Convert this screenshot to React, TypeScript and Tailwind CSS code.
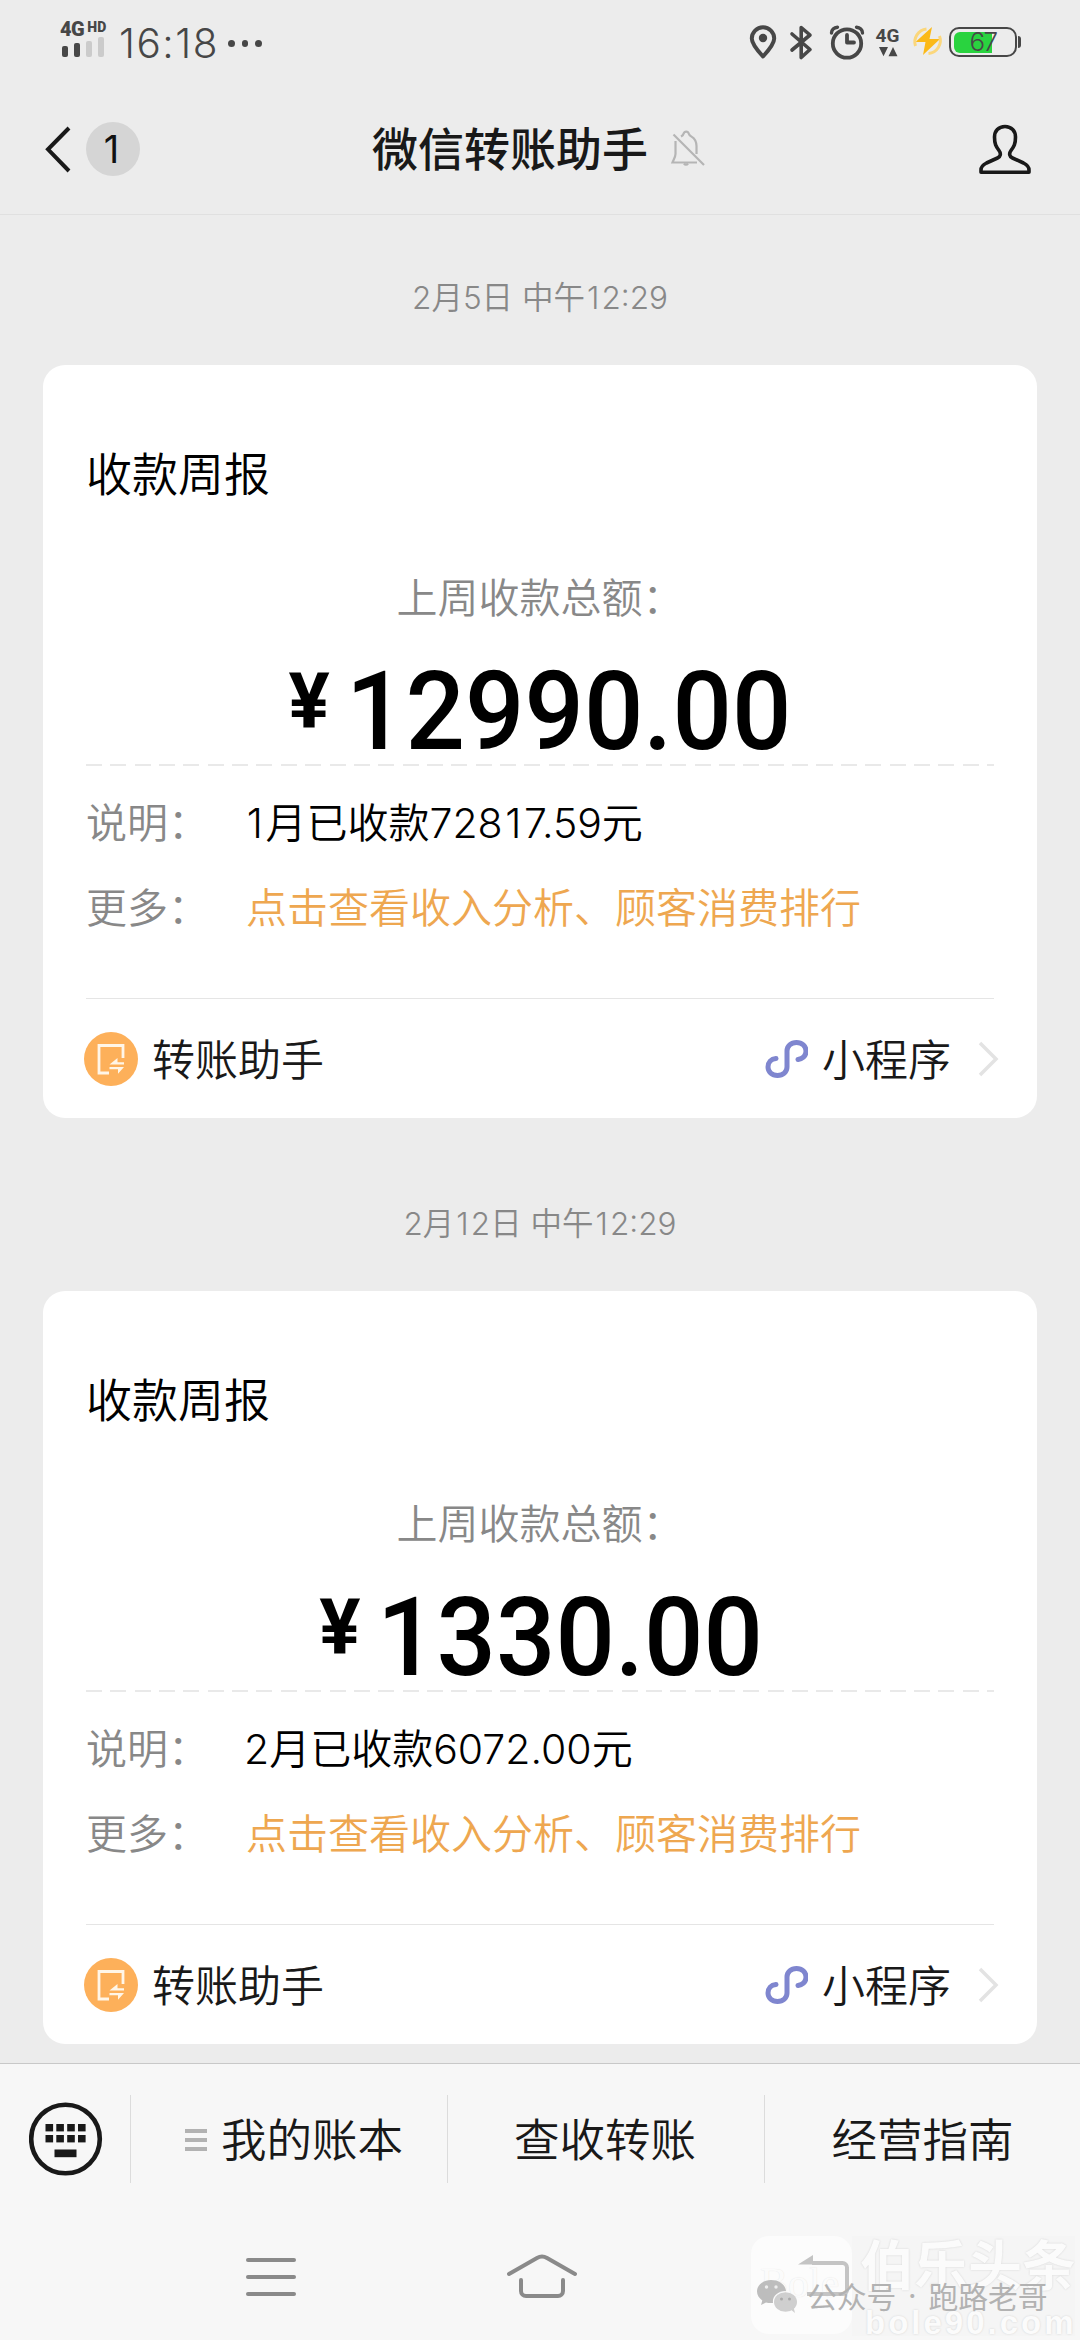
import React from "react";

const font = "font-['Inter','Noto_Sans_CJK_SC',sans-serif]";

/* Gives the narrow figure 1 a little room on both sides. */
function Figures({ text }: { text: string }) {
  return (
    <>
      {text.split(/(1)/).map((part, i) =>
        part === "1" ? (
          <span key={i} className="px-[0.065em]">1</span>
        ) : (
          part
        ),
      )}
    </>
  );
}

function StatusBar() {
  return (
    <div className="flex h-[86px] items-start text-[#474747]">
      <div className="ml-[60px] mt-[20px] flex w-[50px] flex-col">
        <div className="flex h-[18px] items-start font-['Roboto',sans-serif] font-black">
          <span className="text-[20px] leading-[19px] tracking-[-0.5px]">4G</span>
          <span className="ml-[3px] text-[14px] leading-[14px] tracking-[0.2px]">HD</span>
        </div>
        <div className="ml-[2px] flex h-[19px] items-end gap-[6px]">
          <i className="h-[11px] w-[6px] rounded-[2px] bg-[#474747]" />
          <i className="h-[14px] w-[6px] rounded-[2px] bg-[#474747]" />
          <i className="h-[16px] w-[6px] rounded-[2px] bg-[#cbcbcb]" />
          <i className="h-[20px] w-[6px] rounded-[2px] bg-[#cbcbcb]" />
        </div>
      </div>
      <span className="ml-[9px] mt-[19px] w-[100px] whitespace-nowrap text-[40.500px] font-[350] leading-[50px] tracking-[1.500px]">16:18</span>
      <div className="ml-[9px] mt-[40px] flex gap-[7px]">
        <i className="size-[6.5px] rounded-full bg-[#474747]" />
        <i className="size-[6.5px] rounded-full bg-[#474747]" />
        <i className="size-[6.5px] rounded-full bg-[#474747]" />
      </div>
      <div className="ml-auto mt-[20px] flex h-[44px] items-center">
        <svg width="160" height="44" viewBox="745 20 160 44" fill="none" stroke="#474747">
          <path d="M763 56.500C757 50 751.800 44 751.800 38.500a11.200 11.200 0 0 1 22.400 0C774.200 44 769 50 763 56.500Z" strokeWidth="4" strokeLinejoin="round" />
          <circle cx="763" cy="38" r="4.200" fill="#474747" stroke="none" />
          <path d="M792 34l18 15.500-8.800 8V27.500l8.800 7.500-18 15" strokeWidth="3.600" strokeLinecap="round" strokeLinejoin="round" />
          <circle cx="847" cy="43.500" r="14.200" strokeWidth="3.800" />
          <path d="M847 35v7.500h7" strokeWidth="3.800" strokeLinecap="round" strokeLinejoin="round" />
          <path d="M831.500 33c0-3 2.500-5.500 6-5.800M862.500 33c0-3-2.500-5.500-6-5.800" strokeWidth="3.400" strokeLinecap="round" />
          <path d="M879 47h9l-4.500 9.200ZM888.500 56.200h9L893 47Z" fill="#474747" stroke="none" />
          <text x="875.500" y="41.500" fill="#474747" stroke="none" className="font-['Roboto',sans-serif] text-[19px] font-bold">4G</text>
        </svg>
        <svg className="ml-[6px]" width="34" height="34" viewBox="910 26 34 34">
          <path d="M931 28l-16.500 15h10L922 56l17-16h-10.500Z" fill="#fbb918" />
          <path d="M914.500 47a13 13 0 0 1 11-17M938.500 37a13 13 0 0 1-11 17.500" fill="none" stroke="#fbd77c" strokeWidth="3" />
        </svg>
        <div className="relative ml-[4px] h-[30px] w-[68px] rounded-[10px] border-[2.500px] border-[#474747] p-[2.500px]">
          <div className="h-full w-[38px] rounded-l-[6px] bg-[#29d33f]" />
          <span className="absolute inset-0 text-center text-[26px] font-light leading-[26px] tracking-[-1.500px]">67</span>
        </div>
        <i className="ml-[1px] mr-[59px] h-[12px] w-[3px] rounded-r-[3px] bg-[#474747]" />
      </div>
    </div>
  );
}

function Header() {
  return (
    <div className="flex h-[129px] items-start border-b border-[#e0e0e0]">
      <svg className="ml-[43px] mt-[38px]" width="28" height="50" viewBox="43 124 28 50" fill="none" stroke="#191919" strokeWidth="4">
        <path d="M69 128 48 149.300 69 171" />
      </svg>
      <div className="ml-[15px] mt-[36px] size-[54px] rounded-full bg-[#d5d5d5] pr-[3px] text-center text-[38px] leading-[54px] text-[#111]">1</div>
      <div className="ml-[232px] mt-[33px] text-[46px] font-medium leading-[60px] text-[#191919]">微信转账助手</div>
      <svg className="ml-[22px] mt-[43px]" width="36" height="38" viewBox="670 129 36 38" fill="none" stroke="#b5b5b5" strokeWidth="2.200">
        <path d="M675.500 141v13c0 3-2 6-3 8.500h24.500M681 136.500c1.500-.8 2.300-1.500 2.500-2.700 1-3 4.500-3 5.300 0 .4 1.500 1.200 2 2.700 2.800 3.500 2 5 5 5 9.500v8" />
        <path d="M673.500 134.500 704 165M684 163.500c1 1.400 3 1.400 4 0" />
      </svg>
      <svg className="ml-auto mr-[46px] mt-[36px]" width="58" height="54" viewBox="976 122 58 54" fill="none" stroke="#191919" strokeWidth="3.600" strokeLinejoin="round">
        <path d="M1005 126.500c-6.500 0-10.500 4.700-10.500 10.500 0 7 1.500 9.500 4.500 13.500 2.200 3 1.700 6-1.500 7.500l-11 5c-4.500 2.200-5.500 4-5.500 7v2.200h48v-2.200c0-3-1-4.800-5.500-7l-11-5c-3.200-1.500-3.700-4.500-1.500-7.500 3-4 4.500-6.500 4.500-13.500 0-5.800-4-10.500-10.500-10.500Z" />
      </svg>
    </div>
  );
}

function DateLabel({ text }: { text: string }) {
  return (
    <div className="text-center text-[31.500px] font-[350] leading-[40px] text-[#888]">
      <Figures text={text} />
    </div>
  );
}

function Field({ label, children }: { label: string; children: React.ReactNode }) {
  return (
    <div className="flex text-[41px] font-[350] leading-[50px]">
      <span className="w-[160px] text-[#888]">{label}：</span>
      {children}
    </div>
  );
}

function ReportCard({ amount, summary }: { amount: string; summary: string }) {
  return (
    <section className="mx-[43px] mt-[47px] h-[753px] rounded-[22px] bg-white px-[43px] pt-[79px]">
      <h2 className="text-[46px] font-[350] leading-[60px] text-black">收款周报</h2>
      <div className="mt-[69px] text-center text-[41px] font-[350] leading-[50px] text-[#888]">上周收款总额：</div>
      <div className="mt-[37px] flex h-[104px] items-center justify-center pl-px font-['Roboto',sans-serif] text-black">
        <span className="mb-[20px] mr-[16px] text-[77px] font-bold leading-[84px]">¥</span>
        <span className="-mr-[17px] origin-left scale-x-96 text-[109px] font-medium leading-[104px]">{amount}</span>
      </div>
      <div className="h-[2px] bg-[repeating-linear-gradient(90deg,#e9e9e9_0_16px,transparent_16px_24.350px)]" />
      <div className="mt-[32px]">
        <Field label="说明">
          <span className="-ml-[2px] text-black">
            <Figures text={summary} />
          </span>
        </Field>
      </div>
      <div className="mt-[35px]">
        <Field label="更多">
          <span className="text-[#eea750]">点击查看收入分析、顾客消费排行</span>
        </Field>
      </div>
      <div className="mt-[65px] h-px bg-[#e5e5e5]" />
      <div className="flex h-[119px] items-center text-[43px] font-[350] text-[#191919]">
        <svg className="-ml-[2px]" width="54" height="54" viewBox="0 0 54 54" fill="none">
          <circle cx="27" cy="27" r="27" fill="#fdb05a" />
          <path d="M25 41H15V13.500h24V26" stroke="#fff6e8" strokeWidth="2.800" />
          <path d="M25.500 32.500H40v-2.200h-6.500V26ZM40 35H25.500v2.200H34v4.600Z" fill="#fff6e8" />
        </svg>
        <span className="ml-[14px] mt-[2px] leading-[60px]">转账助手</span>
        <svg className="ml-auto" width="44" height="42" viewBox="764 1037 44 42" fill="none" stroke="#7f86cf" strokeWidth="5" strokeLinecap="round">
          <path d="M776 1057.500c-5 .5-8 4-8 8.500 0 5 4 8.500 9.500 8.500s9.500-3.500 9.500-8.500v-16c0-5 4-8.500 9.500-8.500s9.500 3.500 9.500 8.500c0 4.500-3 7.500-8 8.500" />
        </svg>
        <span className="ml-[14px] mt-[2px] leading-[60px]">小程序</span>
        <svg className="-mr-[6px] ml-[25px]" width="24" height="38" viewBox="0 0 24 38" fill="none" stroke="#e3e3e3" strokeWidth="3.500">
          <path d="m4 3 16 16L4 35" />
        </svg>
      </div>
    </section>
  );
}

function Watermark() {
  return (
    <div className="absolute left-[751px] top-[2236px] flex h-[100px] w-[324px]">
      <div className="relative h-[98px] w-[101px] rounded-[18px] bg-white/60">
        <span className="absolute left-[9px] top-[22px] font-['Liberation_Serif',serif] text-[42px] leading-[50px] text-[#fbfbfb] [text-shadow:0_0_1px_#e2e2e2]">Bole</span>
      </div>
      <div className="relative flex-1 bg-[#f5f5f5]">
        <div className="absolute left-[8px] top-[-4px] whitespace-nowrap text-[54px] font-bold leading-[70px] text-[#fbfbfb] [text-shadow:0_0_2px_#d0d0d0]">伯乐头条</div>
        <div className="absolute left-[13px] top-[69px] font-['Liberation_Sans',sans-serif] text-[33px] font-bold leading-[36px] tracking-[3px] text-[#fbfbfb] [text-shadow:0_0_2px_#d0d0d0]">bole90.com</div>
      </div>
      <svg className="absolute left-[4px] top-[16px]" width="100" height="64" viewBox="755 2252 100 64">
        <path d="M812 2263h30.500a4.500 4.500 0 0 1 4.500 4.500V2290a4 4 0 0 1-4 4H807" fill="none" stroke="#c4c4c4" strokeWidth="4" />
        <path d="M798 2264.500 813 2255v9.500Z" fill="#c4c4c4" />
        <path d="M771 2280c8.500 0 14.500 5 15 11-9 0-14 6-13 12-2 .3-5 0-7-.6l-5 2.600 1.300-4.500c-3.300-2.500-5.300-5.500-5.300-9 0-6.500 6-11.500 14-11.500Z" fill="#bdbdbd" />
        <ellipse cx="785.500" cy="2302" rx="11.500" ry="9.800" fill="#cfcfcf" />
        <path d="m790 2309 5 4-1.500-6Z" fill="#cfcfcf" />
        <circle cx="766.500" cy="2287" r="1.700" fill="#eee" />
        <circle cx="776" cy="2287" r="1.700" fill="#eee" />
        <circle cx="781.500" cy="2299" r="1.500" fill="#aaa" />
        <circle cx="789.500" cy="2299" r="1.500" fill="#aaa" />
      </svg>
      <div className="absolute left-[56px] top-[41px] flex font-['Noto_Sans_CJK_SC',sans-serif] text-[29.800px] leading-[36px] text-[#b2b2b2]">
        <span>公众号</span>
        <span className="w-[32px] text-center font-['Inter',sans-serif]">·</span>
        <span>跑路老哥</span>
      </div>
    </div>
  );
}

function BottomBar() {
  return (
    <div className="mt-[19px] flex-1 border-t border-[#c8c8c8] bg-[#f7f7f7]">
      <div className="flex h-[150px] items-center text-[45.500px] font-[350] text-[#191919]">
        <svg className="ml-[29px]" width="74" height="74" viewBox="0 0 74 74">
          <circle cx="36.500" cy="37" r="34.300" fill="none" stroke="#191919" strokeWidth="4.600" />
          <g fill="#191919">
            {[16.5, 27.3, 38.2, 49].map((x) => (
              <React.Fragment key={x}>
                <rect x={x} y="22" width="7.600" height="7.400" />
                <rect x={x} y="33" width="7.600" height="7.400" />
              </React.Fragment>
            ))}
            <rect x="25.500" y="47.500" width="22" height="7.700" />
          </g>
        </svg>
        <i className="ml-[27px] h-[88px] w-px bg-[#dcdcdc]" />
        <div className="ml-[54px] flex w-[262px] items-center">
          <div className="mt-[2px] flex flex-col gap-[5.500px]">
            <i className="h-[3.500px] w-[22px] bg-[#b2b2b2]" />
            <i className="h-[3.500px] w-[22px] bg-[#b2b2b2]" />
            <i className="h-[3.500px] w-[22px] bg-[#b2b2b2]" />
          </div>
          <span className="ml-[14px] mt-[5px] whitespace-nowrap">我的账本</span>
        </div>
        <i className="h-[88px] w-px bg-[#dcdcdc]" />
        <span className="mt-[5px] w-[316px] pr-[2px] text-center">查收转账</span>
        <i className="h-[88px] w-px bg-[#dcdcdc]" />
        <span className="mt-[5px] flex-1 text-center">经营指南</span>
      </div>
      <div className="flex h-[126px] items-center">
        <div className="ml-[246px] flex flex-col gap-[13px]">
          <i className="h-[4px] w-[50px] rounded-full bg-[#8a8a8a]" />
          <i className="h-[4px] w-[50px] rounded-full bg-[#8a8a8a]" />
          <i className="h-[4px] w-[50px] rounded-full bg-[#8a8a8a]" />
        </div>
        <svg className="ml-[208px]" width="76" height="50" viewBox="503 2252 76 50" fill="none" stroke="#8a8a8a" strokeWidth="4" strokeLinecap="round" strokeLinejoin="round">
          <path d="M508 2274 536 2258q5-3 10 0l28 16M520 2280v11a5 5 0 0 0 5 5h32a5 5 0 0 0 5-5v-11" />
        </svg>
      </div>
    </div>
  );
}

export default function App() {
  return (
    <main className={`relative flex h-[2340px] w-[1080px] flex-col overflow-hidden bg-[#ececec] ${font}`}>
      <StatusBar />
      <Header />
      <div className="mt-[63px]">
        <DateLabel text="2月5日 中午12:29" />
      </div>
      <ReportCard amount="12990.00" summary="1月已收款72817.59元" />
      <div className="mt-[86px]">
        <DateLabel text="2月12日 中午12:29" />
      </div>
      <ReportCard amount="1330.00" summary="2月已收款6072.00元" />
      <BottomBar />
      <Watermark />
    </main>
  );
}
